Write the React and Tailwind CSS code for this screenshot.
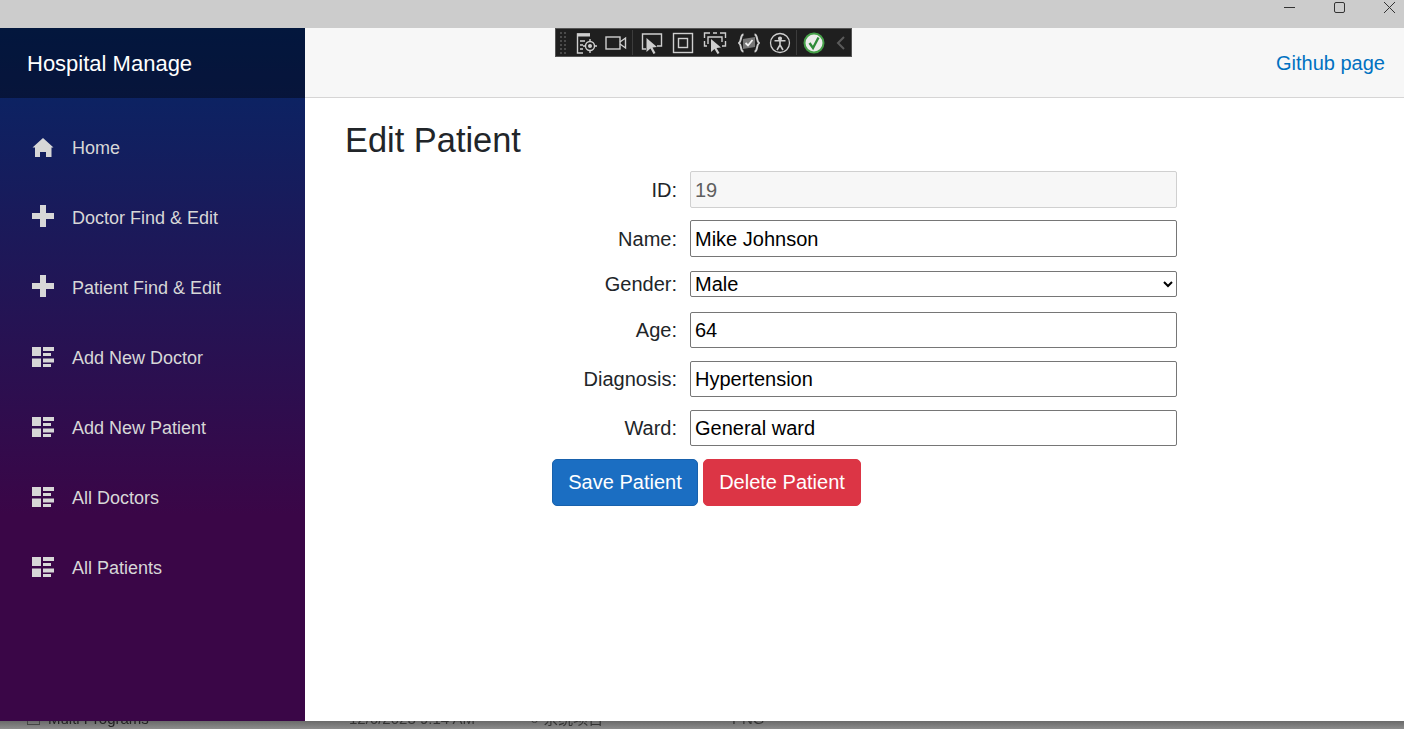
import React from 'react';

const NAV = [
  { label: 'Home', icon: 'home' },
  { label: 'Doctor Find & Edit', icon: 'plus' },
  { label: 'Patient Find & Edit', icon: 'plus' },
  { label: 'Add New Doctor', icon: 'list' },
  { label: 'Add New Patient', icon: 'list' },
  { label: 'All Doctors', icon: 'list' },
  { label: 'All Patients', icon: 'list' },
];

// open-iconic style glyphs used by the Blazor template
const NavIcon = ({ name }) => {
  if (name === 'home') {
    return (
      <svg width="22" height="20" viewBox="0 0 22 20" fill="currentColor">
        <path d="M11 0 L0.5 9.5 L3 9.5 L3 19 L8 19 L8 14 L14 14 L14 19 L19.5 19 L19.5 9.5 L21.5 9.5 Z" />
      </svg>
    );
  }
  if (name === 'plus') {
    return (
      <svg width="22" height="26" viewBox="0 0 22 26" fill="currentColor">
        <path d="M8 0 H14 V8 H22 V14 H14 V22 H8 V14 H0 V8 H8 Z" />
      </svg>
    );
  }
  return (
    <svg width="22" height="22" viewBox="0 0 22 22" fill="currentColor">
      <rect x="0" y="0" width="9" height="9" />
      <rect x="0" y="11.5" width="9" height="8.5" />
      <rect x="11" y="0" width="11" height="4" />
      <rect x="11" y="6" width="8" height="3" />
      <rect x="11" y="11.5" width="11" height="4" />
      <rect x="11" y="17" width="8" height="3" />
    </svg>
  );
};

const Sep = () => <div className="w-px h-[25px] bg-[#3c3c3c] mx-[5px]" />;

// Visual Studio XAML/Blazor debug toolbar
const DebugToolbar = () => (
  <div className="absolute left-[250px] top-0 w-[297px] h-[29px] bg-[#1f1f1f] border border-[#555555] flex items-center text-[#cfcfcf]">
    <svg width="10" height="25" viewBox="0 0 10 25" className="ml-[3px] mr-[7px] text-[#4a4a4a]" fill="currentColor">
      {[2, 6, 10, 14, 18, 22].map(y => (
        <g key={y}>
          <rect x="1" y={y} width="2" height="2" />
          <rect x="5" y={y} width="2" height="2" />
        </g>
      ))}
    </svg>
    <svg width="22" height="24" viewBox="0 0 22 24" fill="none" stroke="currentColor" strokeWidth="1.4">
      <path d="M14 3 H1.5 V22 H7" />
      <rect x="1" y="2.5" width="13" height="3" fill="currentColor" stroke="none" />
      <path d="M4 10 H9 M4 14 H7 M4 18 H7" />
      <circle cx="14" cy="15" r="4.5" />
      <circle cx="14" cy="15" r="1.3" fill="currentColor" />
      <path d="M14 8 V10.5 M14 19.5 V22 M7 15 H9.5 M18.5 15 H21" />
    </svg>
    <svg width="22" height="24" viewBox="0 0 22 24" fill="none" stroke="currentColor" strokeWidth="1.4" className="ml-[7px]">
      <rect x="1" y="6" width="14" height="12" />
      <path d="M15 11 L20.5 7 V17 L15 13" />
    </svg>
    <Sep />
    <svg width="22" height="24" viewBox="0 0 22 24" fill="none" stroke="currentColor" strokeWidth="1.4" className="ml-[3px]">
      <path d="M5 18 H1.5 V3 H20.5 V15 H16" />
      <path d="M5.5 7 L5.5 21 L9.5 17.5 L12.5 23 L14.5 22 L11.5 16.5 L16 16 Z" fill="currentColor" stroke="none" />
    </svg>
    <svg width="22" height="22" viewBox="0 0 22 22" fill="none" stroke="currentColor" strokeWidth="1.4" className="ml-[9px]">
      <rect x="1.5" y="1.5" width="19" height="19" />
      <rect x="6.5" y="6.5" width="9" height="9" />
    </svg>
    <svg width="24" height="24" viewBox="0 0 24 24" fill="none" stroke="currentColor" strokeWidth="1.4" className="ml-[9px]">
      <path d="M1.5 7 V2 H7 M10 2 H14 M17 2 H22.5 V7 M22.5 10 V15 H19 M5 13 V6 H19 V11 M1.5 10 V15 H4" />
      <path d="M8 8 L8 21 L11.5 18 L14.5 23 L16.5 22 L13.5 17 L18 16.5 Z" fill="currentColor" stroke="none" />
    </svg>
    <svg width="22" height="24" viewBox="0 0 22 24" fill="none" stroke="currentColor" strokeWidth="2" className="ml-[11px]">
      <path d="M5.5 3.5 C2 3.5 4 10 1 12 C4 14 2 20.5 5.5 20.5 M16.5 3.5 C20 3.5 18 10 21 12 C18 14 20 20.5 16.5 20.5" />
      <path d="M5 8 L17 6 V16 L5 18 Z" fill="#777777" stroke="none" />
      <path d="M7.5 12 L10 14.5 L14.5 9" strokeWidth="1.8" stroke="#f0f0f0" />
    </svg>
    <svg width="22" height="22" viewBox="0 0 22 22" fill="none" stroke="currentColor" strokeWidth="1.3" className="ml-[9px]">
      <circle cx="11" cy="11" r="9.5" />
      <circle cx="11" cy="6.5" r="1.4" fill="currentColor" />
      <path d="M5.5 8.8 H16.5 M11 9 V13 M11 13 L8 18 M11 13 L14 18" strokeWidth="1.6" />
    </svg>
    <Sep />
    <svg width="22" height="22" viewBox="0 0 22 22" fill="none" className="ml-[1px]">
      <circle cx="11" cy="11" r="9.5" fill="#ececec" stroke="#46a049" strokeWidth="2" />
      <path d="M6.5 11 L10 16 L15.5 5.5" stroke="#2e8b3a" strokeWidth="2.4" />
    </svg>
    <svg width="12" height="16" viewBox="0 0 12 16" fill="none" stroke="#5a5a5a" strokeWidth="2" className="ml-[10px]">
      <path d="M9 2 L3 8 L9 14" />
    </svg>
  </div>
);

const Field = ({ label, value, disabled, tall }) => (
  <div className="flex items-center gap-[13px]">
    <label className="w-[332px] text-right text-[#212529]">{label}</label>
    <input
      readOnly
      disabled={disabled}
      value={value}
      className={`w-[487px] ${tall ? 'h-[37px] pt-[2px]' : 'h-[36px]'} px-1 rounded-[2px] border ${disabled
        ? 'bg-[#f7f7f7] border-[#d0d0d0] text-[#5f5f5f]'
        : 'bg-white border-[#767676] text-black'}`}
    />
  </div>
);

export default function App() {
  return (
    <div className="w-[1404px] h-[729px] overflow-hidden flex flex-col bg-[#cccccc] font-['Liberation_Sans','Noto_Sans_CJK_SC',Arial,sans-serif] text-[20px]">
      {/* Window title bar */}
      <div className="h-[28px] shrink-0 flex justify-end items-start text-[#333333]">
        <svg width="144" height="16" viewBox="0 0 144 16" fill="none" stroke="currentColor" strokeWidth="1">
          <path d="M24 7.5 H35" />
          <rect x="74.5" y="2.5" width="10" height="10" rx="1.5" />
          <path d="M124 2 L135 13 M135 2 L124 13" />
        </svg>
      </div>

      <div className="flex h-[693px] shrink-0">
        <aside className="w-[305px] shrink-0 bg-[linear-gradient(180deg,#052767_0%,#3a0647_70%)] flex flex-col">
          <div className="h-[70px] bg-black/40 flex items-center pl-[27px] pt-[1px] text-[22px] text-white">
            Hospital Manage
          </div>
          <nav className="pt-[15px] flex flex-col">
            {NAV.map(item => (
              <div key={item.label} className="h-[70px] flex items-center text-[18px] text-[#d7d7d7]">
                <span className="w-[72px] pl-[32px] flex shrink-0">
                  <NavIcon name={item.icon} />
                </span>
                {item.label}
              </div>
            ))}
          </nav>
        </aside>

        <main className="flex-1 bg-white flex flex-col relative">
          <header className="h-[70px] bg-[#f7f7f7] border-b border-[#d6d5d5] flex items-center justify-end pr-[19px]">
            <a className="text-[#0071c1]">Github page</a>
          </header>
          <DebugToolbar />
          <div className="pl-[40px] pt-[22px]">
            <h3 className="text-[34.4px] leading-[40px] text-[#212529]">Edit Patient</h3>
            <div className="mt-[11px] flex flex-col">
              <Field label="ID:" value="19" disabled tall />
              <div className="mt-[12px]"><Field label="Name:" value="Mike Johnson" tall /></div>
              <div className="mt-[12px] flex items-center gap-[13px]">
                <label className="w-[332px] text-right text-[#212529]">Gender:</label>
                <select className="w-[487px] h-[26px] rounded-[2px] border border-[#767676] bg-white text-black" defaultValue="Male">
                  <option>Male</option>
                  <option>Female</option>
                </select>
              </div>
              <div className="mt-[13px]"><Field label="Age:" value="64" /></div>
              <div className="mt-[13px]"><Field label="Diagnosis:" value="Hypertension" /></div>
              <div className="mt-[13px]"><Field label="Ward:" value="General ward" /></div>
            </div>
            <div className="mt-[13px] ml-[207px] flex gap-[5px]">
              <button className="w-[146px] h-[47px] pb-[2px] rounded-[5px] bg-[#1b6ec2] border border-[#1861ac] text-white">Save Patient</button>
              <button className="w-[158px] h-[47px] pb-[2px] rounded-[5px] bg-[#dc3545] border border-[#dc3545] text-white">Delete Patient</button>
            </div>
          </div>
        </main>
      </div>

      {/* Blurred window behind, peeking out under the app */}
      <div className="h-[8px] shrink-0 bg-[linear-gradient(180deg,#6a6a6a,#8c8c8c)] overflow-hidden relative text-[15px] leading-[20px]">
        <span className="absolute left-[27px] -top-[4px] w-[13px] h-[8px] border border-[#444444] blur-[0.4px]" />
        <span className="absolute left-[48px] -top-[12px] text-[#222222] blur-[0.5px]">Multi Programs</span>
        <span className="absolute left-[349px] -top-[12px] text-[#333333] blur-[0.5px]">12/6/2023 9:14 AM</span>
        <span className="absolute left-[530px] -top-[12px] text-[#333333] blur-[0.5px]">○ 系统项目</span>
        <span className="absolute left-[732px] -top-[12px] text-[#333333] blur-[0.5px]">PNG</span>
      </div>
    </div>
  );
}
